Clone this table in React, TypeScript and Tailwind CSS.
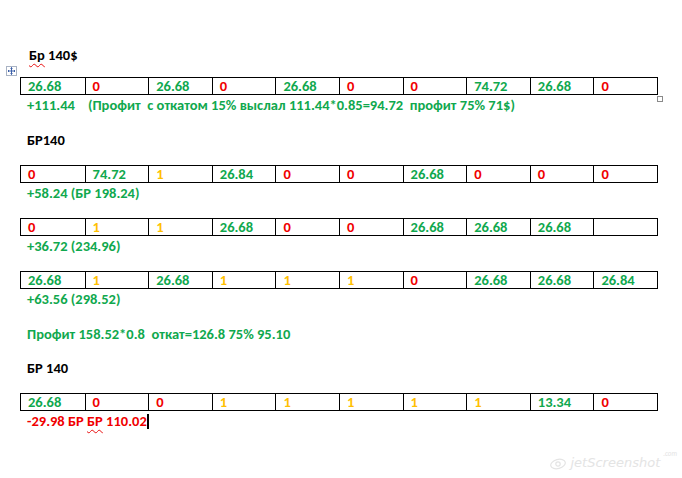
import React from "react";

type Cell = { v: string; c: "g" | "r" | "y" | "" };

const color = {
   g: "text-[#10a84e]",
   r: "text-[#f00000]",
   y: "text-[#ffc000]",
   "": "",
};

const parse = (row: string): Cell[] =>
   row.split(" ").map((x) => {
      if (x === "-") return { v: "", c: "" };
      const [v, c] = x.split(":");
      return { v, c: c as Cell["c"] };
   });

const tables = [
   parse("26.68:g 0:r 26.68:g 0:r 26.68:g 0:r 0:r 74.72:g 26.68:g 0:r"),
   parse("0:r 74.72:g 1:y 26.84:g 0:r 0:r 26.68:g 0:r 0:r 0:r"),
   parse("0:r 1:y 1:y 26.68:g 0:r 0:r 26.68:g 26.68:g 26.68:g -"),
   parse("26.68:g 1:y 26.68:g 1:y 1:y 1:y 0:r 26.68:g 26.68:g 26.84:g"),
   parse("26.68:g 0:r 0:r 1:y 1:y 1:y 1:y 1:y 13.34:g 0:r"),
];

const Row = ({ cells }: { cells: Cell[] }) => (
   <div className="grid grid-cols-10 w-[638px] h-[18px] border border-black">
      {cells.map((cell, i) => (
         <div
            key={i}
            className={`h-[16px] pl-[7px] leading-[17px] ${i > 0 ? "border-l border-black" : ""} ${color[cell.c]}`}
         >
            {cell.v}
         </div>
      ))}
   </div>
);

const Line = ({ children, cls = "text-[#10a84e]" }: { children: React.ReactNode; cls?: string }) => (
   <div className={`h-[20px] leading-[20px] pl-[7px] whitespace-pre ${cls}`}>{children}</div>
);

const Squiggle = ({ children }: { children: React.ReactNode }) => (
   <span className="underline decoration-wavy decoration-[#e81010] decoration-1 underline-offset-[3px]">
      {children}
   </span>
);

const MoveHandle = () => (
   <div className="absolute left-[6px] top-[66px] w-[11px] h-[10px] border border-[#a9b3c4] bg-white flex items-center justify-center">
      <svg width="9" height="8" viewBox="0 0 9 8" fill="none" stroke="#3b5fa8" strokeWidth="1">
         <path d="M4.5 0.5v7M1 4h7" />
         <path d="M3.5 1.5l1-1 1 1M3.5 6.5l1 1 1-1M2 3l-1 1 1 1M7 3l1 1-1 1" />
      </svg>
   </div>
);

export default function App() {
   return (
      <div
         className="relative w-[682px] h-[478px] bg-white overflow-hidden text-[14.5px] font-bold"
         style={{ fontFamily: 'Calibri, Carlito, "Open Sans", "Noto Sans", sans-serif' }}
      >
         <MoveHandle />
         <div className="absolute left-[657px] top-[96px] w-[6px] h-[6px] border border-[#8a8a8a] bg-white" />

         <div className="flex flex-col pl-[20px] pt-[45px]">
            <div className="h-[20px] leading-[20px] pl-[9px] text-black">
               <Squiggle>Бр</Squiggle> 140$
            </div>
            <div className="mt-[12px]">
               <Row cells={tables[0]} />
            </div>
            <Line>{"+111.44    (Профит  с откатом 15% выслал 111.44*0.85=94.72  профит 75% 71$)"}</Line>

            <div className="mt-[15px] h-[20px] leading-[20px] pl-[7px] text-black">БР140</div>
            <div className="mt-[15px]">
               <Row cells={tables[1]} />
            </div>
            <Line>+58.24 (БР 198.24)</Line>

            <div className="mt-[15px]">
               <Row cells={tables[2]} />
            </div>
            <Line>+36.72 (234.96)</Line>

            <div className="mt-[15px]">
               <Row cells={tables[3]} />
            </div>
            <Line>+63.56 (298.52)</Line>

            <div className="mt-[15px]">
               <Line>{"Профит 158.52*0.8  откат=126.8 75% 95.10"}</Line>
            </div>

            <div className="mt-[14px] h-[20px] leading-[20px] pl-[7px] text-black">БР 140</div>
            <div className="mt-[15px]">
               <Row cells={tables[4]} />
            </div>
            <Line cls="text-[#f00000] flex items-center">
               <span>-29.98 БР </span>
               <Squiggle>БР</Squiggle>
               <span> 110.02</span>
               <span className="w-[2px] h-[15px] bg-black" />
            </Line>
         </div>

         <div className="absolute right-[5px] bottom-[8px] flex items-end gap-[3px] text-[#e4e4e4]">
            <svg width="18" height="12" viewBox="0 0 18 12" fill="none" stroke="#e4e4e4" strokeWidth="1.2">
               <ellipse cx="9" cy="6" rx="7.5" ry="4.5" transform="rotate(-15 9 6)" />
               <circle cx="9" cy="6" r="2.2" />
            </svg>
            <span className="italic font-normal text-[13px] leading-[14px]" style={{ fontFamily: '"DejaVu Sans", sans-serif' }}>
               jetScreenshot
            </span>
            <span className="self-start -mt-[6px] italic font-normal text-[7px] leading-[8px]">.com</span>
         </div>
      </div>
   );
}
